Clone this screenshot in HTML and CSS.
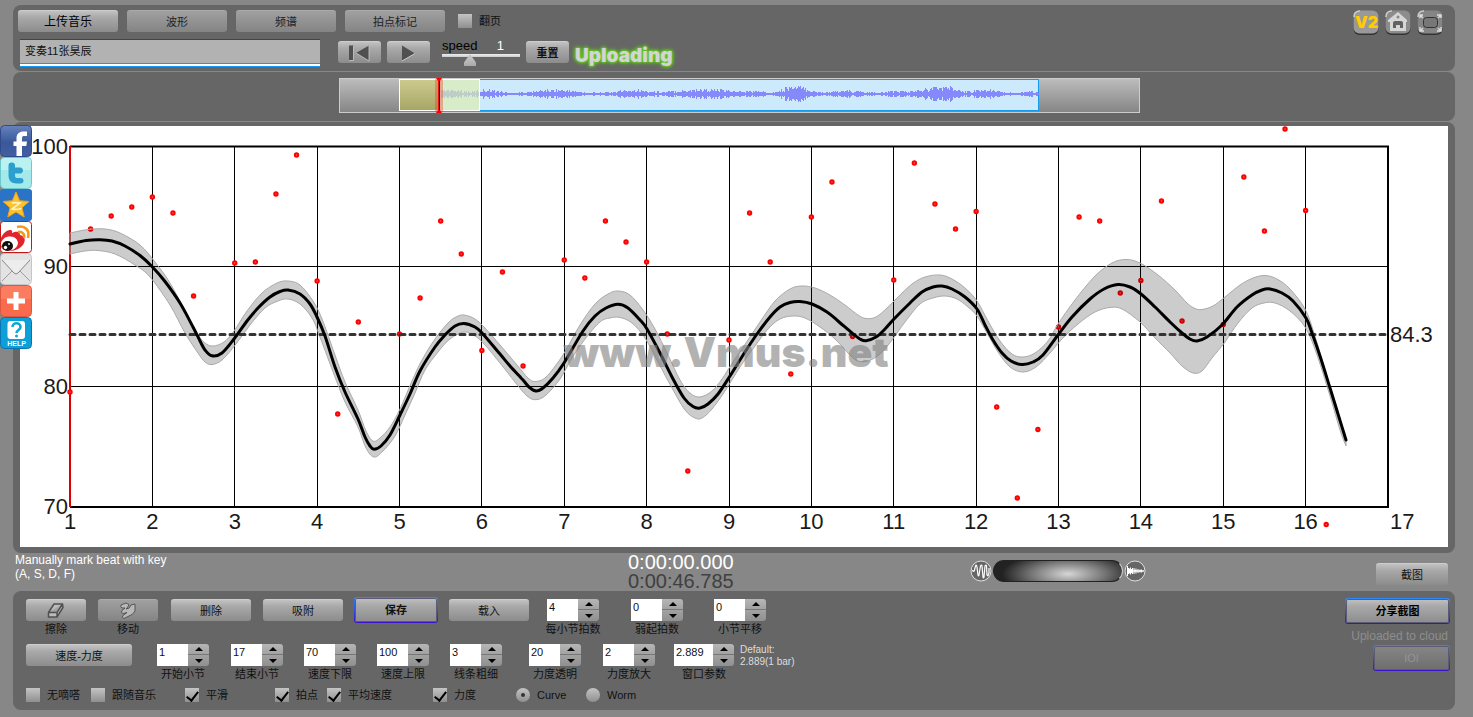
FILE: index.html
```
<!DOCTYPE html>
<html lang="zh-CN">
<head>
<meta charset="utf-8">
<title>Vmus.net</title>
<link rel="stylesheet" href="styles.css">
</head>
<body>
<nav class="share" aria-label="Share">
  <a href="#facebook" aria-label="Facebook"><svg viewBox="0 0 32 32"><defs><linearGradient id="fb" x2="0" y2="1"><stop offset="0" stop-color="#6683bd"/><stop offset=".55" stop-color="#3a5799"/><stop offset="1" stop-color="#425fa0"/></linearGradient></defs><rect x=".5" y=".5" width="31" height="31" rx="4" fill="url(#fb)" stroke="#2f4b8b"/><path d="M16.500 31V21h-3v-4.500h3v-3c0-5 3-7 7-7h3.500V11h-2.500c-2 0-2.500.6-2.500 2.400v3.100h5l-.7 4.500H22v10z" fill="#fff"/></svg></a>
  <a href="#twitter" aria-label="Twitter"><svg viewBox="0 0 32 32"><rect x=".5" y=".5" width="31" height="31" rx="4" fill="#a5eaea" stroke="#6cc9cf"/><path d="M1 5q0-4 4-4h22q4 0 4 4v8H1z" fill="#b9f2f1"/><path d="M11.500 5.500c2.500 0 3.500 1 3.500 3v2h5c4 0 4 6 0 6h-5v2c0 2 1 2.500 3 2.500h2.500c4 0 4 5.500 0 5.500h-4c-5 0-8-3-8-8V8.500c0-2 1-3 3-3z" fill="#2d9fce"/></svg></a>
  <a href="#qzone" aria-label="Qzone"><svg viewBox="0 0 32 32"><rect width="32" height="32" rx="3" fill="#2a73c7"/><path d="M16 3l3.600 8.700 9.400.8-7 6.200 2.200 9.300L16 23l-8.200 5 2.200-9.300-7-6.200 9.400-.8z" fill="#fcc32c" stroke="#f2a313"/><path d="M11.500 14q4-.8 8.500 0l-8 6q4 1 9.500-.5" fill="none" stroke="#fff3c4" stroke-width="1.600"/></svg></a>
  <a href="#weibo" aria-label="Weibo"><svg viewBox="0 0 32 32"><rect x=".5" y=".5" width="31" height="31" rx="3" fill="#fff" stroke="#c11818"/><path d="M1 17c2-5 6-8 9-8s2 2 2 3c4-2 8-2 8 2 4 1 6 4 4 8-2 5-9 8-14 8-4 0-7-1-9-4z" fill="#e2252c"/><ellipse cx="9.500" cy="22.500" rx="8.500" ry="7" fill="#fff" transform="rotate(-10 9.500 22.500)"/><ellipse cx="7.500" cy="25" rx="5.500" ry="5" fill="#111"/><circle cx="5.500" cy="26.500" r="1.700" fill="#fff"/><circle cx="9" cy="23" r=".9" fill="#fff"/><path d="M17 6c8-2 13 3 11 11M18 11c4-1 7 2 6 6" fill="none" stroke="#f39a1e" stroke-width="2.600"/></svg></a>
  <a href="#mail" aria-label="Mail"><svg viewBox="0 0 32 32"><rect x=".5" y=".5" width="31" height="31" rx="4" fill="#e3e3e3" stroke="#c6c6c6"/><path d="M2 28l11-11M30 28L19 17" stroke="#9d9d9d" fill="none"/><path d="M2 7l12 13q2 2 4 0L30 7" fill="#ededed" stroke="#888"/></svg></a>
  <a href="#more" aria-label="More"><svg viewBox="0 0 32 32"><rect x=".5" y=".5" width="31" height="31" rx="4" fill="#fb6a4c" stroke="#d9583e"/><path d="M1 5q0-4 4-4h22q4 0 4 4v9H1z" fill="#fc7c60"/><path d="M13.500 7h5v6.500H25v5h-6.500V25h-5v-6.500H7v-5h6.500z" fill="#fff"/></svg></a>
  <a href="#help" aria-label="Help"><svg viewBox="0 0 32 32"><rect x=".5" y=".5" width="31" height="31" rx="4" fill="#0f9fd8" stroke="#0875ae"/><rect x="7.500" y="4" width="17.500" height="18" rx="3" fill="#fff"/><path d="M12.500 10c0-5 8-5 8 0 0 3-4 3-4 6" fill="none" stroke="#12a6d8" stroke-width="2.600"/><circle cx="16.500" cy="19" r="1.500" fill="#12a6d8"/><text x="16.500" y="29" class="help-word">HELP</text></svg></a>
</nav>

<main class="app">
  <header class="panel top">
    <div class="top-left">
      <div class="tabs">
        <button class="btn lead">上传音乐</button><button class="btn dim">波形</button><button class="btn dim">频谱</button><button class="btn dim">拍点标记</button>
        <label class="check"><input type="checkbox"><span>翻页</span></label>
      </div>
      <div class="transport">
        <input class="title" type="text" value="变奏11张昊辰" aria-label="曲名">
        <button class="btn play" aria-label="回到开头"><svg viewBox="0 0 43 20"><path d="M11 2.500h4.500v15H11zM31 2.500v15.500L18 10z" fill="#505050"/><path d="M15.500 3v14.500H11M31 2.500v15.500L18 10" fill="none" stroke="#ccc" stroke-width=".8"/></svg></button>
        <button class="btn play" aria-label="播放"><svg viewBox="0 0 43 20"><path d="M15 2.500v15.500l13-7.500z" fill="#505050"/><path d="M15 18l13-7.500" stroke="#ccc"/></svg></button>
        <div class="speed"><label for="speed">speed</label><output for="speed">1</output><input id="speed" type="range" min="0" max="3" value="1"></div>
        <button class="btn reset">重置</button>
        <span class="uploading">Uploading</span>
      </div>
    </div>
    <div class="tools">
      <button aria-label="V2"><svg viewBox="0 0 26 25"><rect x=".5" y="2" width="25" height="23" rx="6" fill="#333"/><rect x=".5" y=".5" width="25" height="23" rx="6" fill="#999"/><path d="M1 7q0-6 6-6" fill="none" stroke="#ccc" stroke-width="1.500"/><text x="13.500" y="18" class="v2">V2</text></svg></button>
      <button aria-label="主页"><svg viewBox="0 0 26 25"><rect x=".5" y="2" width="25" height="23" rx="6" fill="#333"/><rect x=".5" y=".5" width="25" height="23" rx="6" fill="#8c8c8c"/><path d="M1 7q0-6 6-6" fill="none" stroke="#ccc" stroke-width="1.500"/><path d="M13 2l9 8v2h-1v9H5v-9H3v-2z" fill="#d6d6d6"/><path d="M8 18v-5q0-2 2-2h6q2 0 2 2v5h-3v-3h-4v3z" fill="#626262"/><circle cx="13" cy="7" r="1.500" fill="#888"/></svg></button>
      <button aria-label="全屏"><svg viewBox="0 0 26 25"><rect x=".5" y="2" width="25" height="23" rx="6" fill="#333"/><rect x=".5" y=".5" width="25" height="23" rx="6" fill="#858585"/><path d="M1 7q0-6 6-6" fill="none" stroke="#ccc" stroke-width="1.500"/><rect x="6.500" y="7.500" width="14" height="10" rx="3" fill="#777" stroke="#333"/><path d="M3 8V5h3M20 5h4v3M3 17v4h4M20 21h4v-4M3 5l3 3M24 5l-3 3M3 21l3-3M24 21l-3-3" fill="none" stroke="#ddd" stroke-width="1.400"/></svg></button>
    </div>
  </header>

  <section class="panel overview" aria-label="Overview">
    <svg class="overview-bar" viewBox="0 0 801 35">
      <defs><linearGradient id="bar" x2="0" y2="1"><stop offset="0" stop-color="#bdbdbd"/><stop offset="1" stop-color="#858585"/></linearGradient>
      <linearGradient id="olive" x2="0" y2="1"><stop offset="0" stop-color="#cccb8e"/><stop offset="1" stop-color="#a8a666"/></linearGradient></defs>
      <rect x=".5" y=".5" width="800" height="34" fill="url(#bar)" stroke="#ccc"/>
      <rect x="100.500" y="1.500" width="599" height="31" fill="#cdeafc" stroke="#149bee"/>
      <path id="wave" fill="#8589fb"/>
      <rect x="60.500" y="1.500" width="80" height="31" fill="#dcedb0" fill-opacity=".35" stroke="#fff"/>
      <rect x="102" y="2" width="38" height="30" fill="#dcedb0" fill-opacity=".5"/>
      <rect x="61" y="2" width="38" height="30" fill="url(#olive)"/>
      <rect x="96" y="1" width="8" height="33" fill="#f03010" opacity=".35"/>
      <path d="M100.500 1v33" stroke="#200"/><path d="M99.500 1v33" stroke="#e11"/>
      <path d="M97 0h6l-2 3h-2zM97 35h6l-2-3h-2z" fill="#f00"/>
    </svg>
  </section>

  <section class="panel chart-panel" aria-label="Tempo curve">
    <svg class="chart" viewBox="20 126 1428 421">
      <rect x="20" y="126" width="1428" height="421" fill="#fff"/>
      <path id="grid" class="grid"/>
      <path d="M70 146.500H1388V507H70" class="frame"/>
      <path d="M70 146v361" class="start"/>
      <g id="dots" class="dots"></g>
      <path id="band" class="band"/>
      <path d="M70 334.500H1388" class="mean"/>
      <path id="curve" class="curve"/>
      <text x="726" y="367" class="mark">www.Vmus.net</text>
      <g id="labels" class="axis"></g>
    </svg>
  </section>

  <section class="status">
    <p class="hint">Manually mark beat with key<br>(A, S, D, F)</p>
    <p class="time">0:00:00.000<br><span>0:00:46.785</span></p>
    <div class="mix">
      <svg viewBox="0 0 22 22"><circle cx="11" cy="11" r="10" fill="#666" stroke="#ddd"/><path d="M2.500 10q1 3 2 0l1-4q1-2 1.500 1l1 8q.5 2 1 0l1.500-9q1-2 1.500 0l1 11q.5 2 1 0L15 6q1-2 1.500 0l.5 9q1 2 2-2V8" fill="none" stroke="#fff" stroke-width="1.200"/></svg>
      <input type="range" aria-label="混音">
      <svg viewBox="0 0 22 22"><circle cx="11" cy="11" r="10" fill="#666" stroke="#ddd"/><path d="M3 11h17" stroke="#fff" stroke-width="1.500"/><path d="M3.500 6v10M4.500 8v6M5.500 8.500v5M6.500 7.500v7M7.500 9v4M8.500 8v6M10 8v6M11 9.500v3M12 8.500v5M14 9v4M16 9.500v3M17.500 9.500v3" stroke="#fff" fill="none"/></svg>
    </div>
    <button class="btn">截图</button>
  </section>

  <footer class="panel controls">
    <div class="settings">
      <div class="row edit">
        <div class="tool"><button class="btn" aria-labelledby="l-erase"><svg viewBox="0 0 60 20"><path d="M22.500 11.500L28 3h8.500l.5 3.500-6 9.500h-8.500zM22.500 11.500H31L36.500 3M31 11.500V16" fill="#bbb" stroke="#505050" stroke-width="1.500"/></svg></button><span id="l-erase">擦除</span></div>
        <div class="tool"><button class="btn dim" aria-labelledby="l-move"><svg viewBox="0 0 60 20"><path d="M37 3v7q-2 4-6 5l-5 2.500q-3-1-1-3l4-3-4 1q-3-1-1-3l3-2.500-3 0q-2-1-1-3l5-2 3 1.500q-1 3-3 4.500 4 0 5-4z" fill="#b8b8b8" stroke="#555"/></svg></button><span id="l-move">移动</span></div>
        <button class="btn">删除</button><button class="btn">吸附</button><button class="btn focus">保存</button><button class="btn">载入</button>
        <div class="field"><div class="spin"><input id="a1" value="4"><button aria-label="+"></button><button aria-label="−"></button></div><label for="a1">每小节拍数</label></div>
        <div class="field"><div class="spin"><input id="a2" value="0"><button aria-label="+"></button><button aria-label="−"></button></div><label for="a2">弱起拍数</label></div>
        <div class="field"><div class="spin"><input id="a3" value="0"><button aria-label="+"></button><button aria-label="−"></button></div><label for="a3">小节平移</label></div>
      </div>
      <div class="row params">
        <button class="btn">速度-力度</button>
        <div class="field"><div class="spin"><input id="b1" value="1"><button aria-label="+"></button><button aria-label="−"></button></div><label for="b1">开始小节</label></div>
        <div class="field"><div class="spin"><input id="b2" value="17"><button aria-label="+"></button><button aria-label="−"></button></div><label for="b2">结束小节</label></div>
        <div class="field"><div class="spin"><input id="b3" value="70"><button aria-label="+"></button><button aria-label="−"></button></div><label for="b3">速度下限</label></div>
        <div class="field"><div class="spin"><input id="b4" value="100"><button aria-label="+"></button><button aria-label="−"></button></div><label for="b4">速度上限</label></div>
        <div class="field"><div class="spin"><input id="b5" value="3"><button aria-label="+"></button><button aria-label="−"></button></div><label for="b5">线条粗细</label></div>
        <div class="field"><div class="spin"><input id="b6" value="20"><button aria-label="+"></button><button aria-label="−"></button></div><label for="b6">力度透明</label></div>
        <div class="field"><div class="spin"><input id="b7" value="2"><button aria-label="+"></button><button aria-label="−"></button></div><label for="b7">力度放大</label></div>
        <div class="field wide"><div class="spin"><input id="b8" value="2.889"><button aria-label="+"></button><button aria-label="−"></button></div><label for="b8">窗口参数</label></div>
        <p class="default">Default:<br>2.889(1 bar)</p>
      </div>
      <div class="row options">
        <label class="check"><input type="checkbox"><span>无嘀嗒</span></label>
        <label class="check"><input type="checkbox"><span>跟随音乐</span></label>
        <label class="check"><input type="checkbox" checked><span>平滑</span></label>
        <label class="check"><input type="checkbox" checked><span>拍点</span></label>
        <label class="check"><input type="checkbox" checked><span>平均速度</span></label>
        <label class="check"><input type="checkbox" checked><span>力度</span></label>
        <label class="check"><input type="radio" name="view" checked><span>Curve</span></label>
        <label class="check"><input type="radio" name="view"><span>Worm</span></label>
      </div>
    </div>
    <div class="cloud">
      <button class="btn focus">分享截图</button>
      <span>Uploaded to cloud</span>
      <button class="btn focus ioi" disabled>IOI</button>
    </div>
  </footer>
</main>
<script src="chart.js"></script>
</body>
</html>
```
FILE: styles.css
```
* { box-sizing: border-box; }
body {
  margin: 0;
  background: #878787;
  color: #111;
  font: 11px/14px "Liberation Sans", "Noto Sans CJK SC", sans-serif;
}
p { margin: 0; }
button, input { font: inherit; color: inherit; margin: 0; }
button { padding: 0; border: 0; background: none; }
svg { display: block; }

.app { padding: 5px 18px 7px 13px; }
.panel { background: #666; border-radius: 8px; }

.btn {
  height: 22px;
  border-radius: 3px;
  background: linear-gradient(#c2c2c2, #a9a9a9 30%, #8c8c8c);
  border-top: 1px solid #cdcdcd;
  line-height: 20px;
  white-space: nowrap;
}
.btn.dim { background: linear-gradient(#a0a0a0, #848484); border-top-color: #aaa; color: #222; }
.btn.focus {
  height: 26px;
  margin: -2px;
  border: 1px solid transparent;
  background: linear-gradient(#c2c2c2, #a9a9a9 30%, #8c8c8c) padding-box, linear-gradient(#2a8cff, #3a10c8) border-box;
  box-shadow: inset 0 0 0 1px #5b5b78;
  font-weight: bold;
}
.btn svg { width: 100%; height: 20px; }

/* header */
.top { height: 66px; display: flex; justify-content: space-between; padding: 5px 12px 4px 5px; }
.top-left { display: flex; flex-direction: column; gap: 7px; }
.tabs { display: flex; gap: 9px; align-items: center; }
.tabs .btn { width: 100px; }
.tabs .check { margin-left: 4px; }
.btn.lead { font-size: 12px; color: #000; }
.transport { display: flex; align-items: flex-start; gap: 6px; padding-left: 2px; }
.title {
  width: 300px; height: 28px; margin-right: 12px; padding: 0 5px 6px;
  border: 0; border-top: 1px solid #444; border-bottom: 1px solid #0f9bf5;
  background: #b2b2b2; box-shadow: inset 0 -2px #fff, inset 0 -3px #0f9bf5;
}
.play, .reset { width: 43px; margin-top: 2px; }
.reset { font-weight: bold; }
.speed {
  display: grid; grid-template-columns: 1fr auto; width: 78px; margin-left: 6px;
  font-size: 13px; line-height: 14px; color: #000;
}
.speed output { color: #fff; padding-right: 16px; }
.speed input {
  grid-column: 1 / 3; appearance: none; width: 100%; height: 14px; background: linear-gradient(#eee, #ccc) 0 1px / 100% 3px no-repeat;
}
.speed input::-webkit-slider-thumb {
  appearance: none; width: 12px; height: 12px; background: linear-gradient(#ccc, #aaa);
  clip-path: polygon(50% 0, 100% 70%, 100% 100%, 0 100%, 0 70%);
}
.uploading {
  font: 900 19px/34px Inter, "Liberation Sans", sans-serif; height: 34px; color: #d4d4d4;
  text-shadow: 0 0 2px #6c2, 0 0 3px #6c2, 0 0 4px #6c2, 0 0 5px #6c2;
}
.tools { display: flex; gap: 6px; align-items: flex-start; }
.tools svg { width: 26px; height: 25px; }
.v2 { font: 900 16px Inter, "Liberation Sans", sans-serif; fill: #fc0; text-anchor: middle; }

/* overview */
.overview { margin-top: 1px; padding: 6px 0 8px; display: grid; grid-template-columns: 326fr 801fr 315fr; }
.overview-bar { grid-column: 2; width: 100%; }

/* chart */
.chart-panel { margin-top: 1px; padding: 4px 7px 6px; }
.chart { width: 100%; }
.grid { fill: none; stroke: #000; stroke-width: 1; shape-rendering: crispEdges; }
.frame { fill: none; stroke: #000; stroke-width: 2; }
.start { stroke: #d00; stroke-width: 2; }
.band { fill: #000; fill-opacity: .2; stroke: #aaa; }
.curve { fill: none; stroke: #000; stroke-width: 3; stroke-linecap: round; }
.mean { stroke: #333; stroke-width: 3; stroke-dasharray: 5 5; stroke-linecap: round; }
.dots { fill: #f66; stroke: #f00; stroke-width: 2; }
.axis { font: 22px "Liberation Sans", sans-serif; fill: #1a1a1a; }
.mark { font: 900 41px Inter, "Liberation Sans", sans-serif; fill: #808080; opacity: .6; text-anchor: middle; }

/* status */
.status { height: 38px; display: grid; grid-template-columns: 615fr 342fr 406fr 72px 7px; align-items: start; color: #fff; }
.hint { font-size: 12px; padding-left: 2px; }
.time { font-size: 20px; line-height: 19px; }
.time span { color: #404040; }
.mix { display: flex; align-items: center; gap: 1px; padding-top: 7px; }
.mix svg { width: 22px; height: 22px; }
.mix input {
  appearance: none; width: 130px; height: 22px; border-radius: 11px; border: 1px solid #222; border-right-color: #ccc;
  background: radial-gradient(ellipse 66px 22px at 74px 13px, #d6d6d6, #777 55%, #222);
}
.mix input::-webkit-slider-thumb { appearance: none; width: 10px; height: 20px; background: none; }
.status .btn { margin-top: 10px; color: #111; }

/* controls */
.controls { display: flex; justify-content: space-between; height: 119px; padding: 8px 7px 0 13px; }
.row { display: grid; justify-content: start; align-items: start; }
.edit { grid-template-columns: 72px 73px 92px 93px 93px 98px 84px 83px 52px; height: 45px; }
.edit > .btn { width: 80px; }
.edit > .btn.focus { width: 84px; }
.params { grid-template-columns: 131px 74px 73px 73px 73px 79px 74px 71px 66px auto; height: 44px; }
.params .btn { width: 106px; }
.tool, .field { display: flex; flex-direction: column; align-items: center; gap: 1px; width: 60px; white-space: nowrap; }
.tool .btn { width: 60px; }
.field { width: 52px; }
.field.wide { width: 60px; }
.spin { display: grid; grid-template-columns: 1fr 21px; grid-template-rows: 11px 11px; width: 100%; }
.spin input { grid-row: 1 / 3; width: 100%; min-width: 0; border: 0; padding: 0 0 6px 2px; background: #fff; color: #111; }
.spin button {
  display: grid; place-items: center; background: linear-gradient(#b6b6b6, #a2a2a2);
  border-radius: 0 3px 0 0; border-bottom: 1px solid #777;
}
.spin button + button { border-radius: 0 0 3px 0; background: linear-gradient(#a2a2a2, #909090); border: 0; }
.spin button::after { content: ""; border: 4px solid transparent; border-top: 0; border-bottom-color: #000; }
.spin button + button::after { border: 4px solid transparent; border-bottom: 0; border-top-color: #000; }
.default { font-size: 10px; line-height: 12px; color: #ddd; }
.options { grid-template-columns: 65px 94px 90px 52px 106px 83px 70px auto; }

.check { display: flex; align-items: center; gap: 7px; white-space: nowrap; }
.check input {
  appearance: none; width: 14px; height: 14px; background: linear-gradient(#c4c4c4, #8f8f8f);
  display: grid; place-items: center;
}
.check input[type="checkbox"]:checked::after {
  content: ""; width: 5px; height: 10px; border: solid #000; border-width: 0 2px 2px 0; transform: rotate(38deg);
}
.check input[type="radio"] { border-radius: 50%; }
.check input[type="radio"]:checked::after { content: ""; width: 4px; height: 4px; border-radius: 50%; background: #333; }

.cloud { display: flex; flex-direction: column; align-items: flex-end; padding-top: 1px; color: #8e8e8e; font-size: 12px; }
.cloud .btn { width: 105px; color: #000; font-size: 11px; }
.cloud span { margin: 7px 0 4px; }
.cloud .ioi {
  width: 77px; color: #949494; font-weight: normal;
  background: linear-gradient(#868686, #6e6e6e) padding-box, linear-gradient(#2a8cff, #3a10c8) border-box;
}

/* share buttons lie over the page edge */
.share { position: absolute; left: 0; top: 125px; display: flex; flex-direction: column; }
.share svg { width: 32px; height: 32px; }
.help-word { font: bold 7px "Liberation Sans", sans-serif; fill: #fff; text-anchor: middle; }
```
FILE: chart.js
```
(() => {
const center = [70,244,86,240.5,100,239.7,112,241,125,246,140,255.5,152,266.5,165,281.5,180,303,193,327,200,341,205,350,212,355.8,222,353,234,339,247,321,258,308,270,297,280,291.5,288,290,300,294,310,304,317,317,325,336,335,367,345,392,358,419,365,437,370,446,374,449.3,381,446,390,435,400,415,410,394,420,371,435,347,445,335,455,326,464,323.5,475,327,482,333,500,354,510,366,523,380,529,387,536,391,543,388,553,378,564,363,583,331,595,316,606,308,618,304.3,628,308,640,320,647,329,660,353,672,377,684,398,693,406.5,700,408,708,404,718,394,730,376,745,352,757,334,770,317,780,307,790,302.5,800,301.5,812,304,827,312,838,321,852,333,860,339,866,340.7,876,337,885,329,894,319,910,303,922,292,933,287,942,286,952,289,965,297,977,309,985,325,993,340,1002,353,1011,361,1022,364.5,1033,362,1043,355,1058,335,1072,317,1090,299,1104,289,1118,284.5,1130,287,1141,294,1155,307,1170,322,1182,333,1190,339,1197,341,1207,337,1222,325,1237,307,1252,295,1262,290,1270,289,1282,293,1293,301,1306,318,1312,333,1320,356,1330,388,1338,414,1346,440];
const upper = [70,233,88,229.5,105,229,120,233,140,245,155,262,170,283,185,311,197,333,205,343,213,346,224,342,234,331,247,311,262,293,277,283,288,281,300,285,313,301,322,319,335,355,345,382,358,410,366,431,373,441,380,438,390,427,400,409,412,381,422,360,435,339,448,323,456,317,464,315,475,319,485,328,500,345,517,365,528,378,535,381.5,545,378,556,365,566,350,580,325,595,304,608,294,618,291,630,295,643,310,655,329,668,355,680,380,690,393,700,397,712,391,722,379,733,362,748,340,760,322,775,301,790,289,802,286,815,288,830,295,845,305,858,315,866,318.5,876,317,887,308,897,298,912,284,925,277,940,275,952,279,965,288,977,301,988,321,1000,341,1012,354,1023,357,1035,353,1048,341,1058,324,1075,300,1095,276,1112,263,1126,259.5,1140,263,1158,275,1175,290,1187,303,1195,308.5,1202,309.5,1213,306,1225,297,1240,285,1253,278,1265,275.5,1277,279,1290,289,1305,309,1314,333,1325,370,1338,412,1346,440];
const lower = [70,254,85,251,98,250.5,115,254,135,265,150,277,170,305,185,333,198,353,205,362,212,364.5,222,360,236,344,250,325,265,308,278,301,288,299,300,304,312,318,320,337,335,377,345,402,358,427,366,448,374,457,383,451,395,436,405,415,415,393,425,370,438,352,450,339,464,332,475,336,485,345,500,363,515,382,527,396,536,399.7,546,395,560,379,572,358,585,339,600,322,610,318,620,317.5,632,323,645,338,658,362,672,388,685,410,695,418,702,418,712,409,725,391,740,367,755,346,768,329,780,319,793,316,805,318,820,327,835,339,850,355,858,361,868,361,880,354,892,340,905,322,920,304,933,298,945,296,957,299,968,307,977,316,987,333,998,352,1010,367,1023,372,1036,367,1050,353,1062,339,1078,324,1095,312,1110,307.5,1122,309,1140,322,1155,338,1170,353,1182,366,1193,373,1202,371,1212,358,1225,342,1238,323,1252,308,1264,303,1275,303,1290,311,1305,327,1316,352,1330,396,1340,430,1346,446];
/* beat index (quarter bars) -> y */
const beats = {0:392,1:229,2:216,3:207,4:197,5:213,6:296,8:263,9:262,10:194,11:155,12:281,13:414,14:322,16:334,17:298,18:221,19:254,20:350.5,21:272,22:366,24:260,25:278,26:221,27:242,28:262,29:334,30:471,32:340,33:213,34:262,35:374,36:217,37:182,38:336.5,40:280,41:163,42:204,43:229,44:211.5,45:407,46:498,47:429.5,48:327,49:217,50:221,51:293,52:280.5,53:201,54:321,56:324.5,57:177,58:231,59:129,60:210.5,61:524.5};
const x0 = 70, barWidth = 82.375;
const pairs = a => a.reduce((r, v, i) => { if (i % 2) r[r.length - 1].push(v); else r.push([v]); return r; }, []);

function smooth(p) {
  let d = "";
  for (let i = 0; i < p.length - 1; i++) {
    const a = p[i - 1] || p[i], b = p[i], c = p[i + 1], e = p[i + 2] || c;
    d += `C${b[0] + (c[0] - a[0]) / 6} ${b[1] + (c[1] - a[1]) / 6} ${c[0] - (e[0] - b[0]) / 6} ${c[1] - (e[1] - b[1]) / 6} ${c[0]} ${c[1]}`;
  }
  return d;
}
const set = (id, d) => document.getElementById(id).setAttribute("d", d);
const c = pairs(center), u = pairs(upper), l = pairs(lower).reverse();
set("curve", "M" + c[0] + smooth(c));
set("band", "M" + u[0] + smooth(u) + "L" + l[0] + smooth(l) + "Z");

let grid = "M70 266.500H1388M70 386.500H1388", labels = "";
for (let i = 0; i <= 16; i++) {
  const x = x0 + i * barWidth;
  if (i && i < 16) grid += `M${Math.floor(x) + .5} 147V507`;
  labels += i < 16 ? `<text x="${x}" y="529" text-anchor="middle">${i + 1}</text>` : `<text x="1390" y="529">17</text>`;
}
[100, 90, 80, 70].forEach((v, i) => { labels += `<text x="68" y="${154 + i * 120}" text-anchor="end">${v}</text>`; });
labels += '<text x="1390" y="342">84.3</text>';
set("grid", grid);
document.getElementById("labels").innerHTML = labels;
document.getElementById("dots").innerHTML = Object.entries(beats)
  .map(([i, y]) => `<circle cx="${x0 + i * barWidth / 4}" cy="${y}" r="1.700"/>`).join("");

/* loudness bumps: centre, height, width */
const bumps = [[111,2.5,18],[148,3,14],[215,3,24],[293,3,20],[364,3.5,34],[419,1.5,18],[448,3,8],[460,5,14],[506,2,20],[557,2,14],[595,5,18],[610,3,8],[644,3,18],[690,2,8]];
let above = "M102 16", below = "";
for (let x = 102; x < 700; x++) {
  let h = 1;
  bumps.forEach(b => { h += b[1] * Math.exp(-(((x - b[0]) / b[2]) ** 2)); });
  const n = Math.abs(Math.sin(x * 12.9898) * 43758.5453) % 1;
  const y = Math.max(1, Math.round(h * (.4 + .9 * n)));
  above += `L${x} ${16 - y}H${x + 1}`;
  below = `L${x + 1} ${16 + y}H${x}` + below;
}
set("wave", above + below + "Z");
})();
```
